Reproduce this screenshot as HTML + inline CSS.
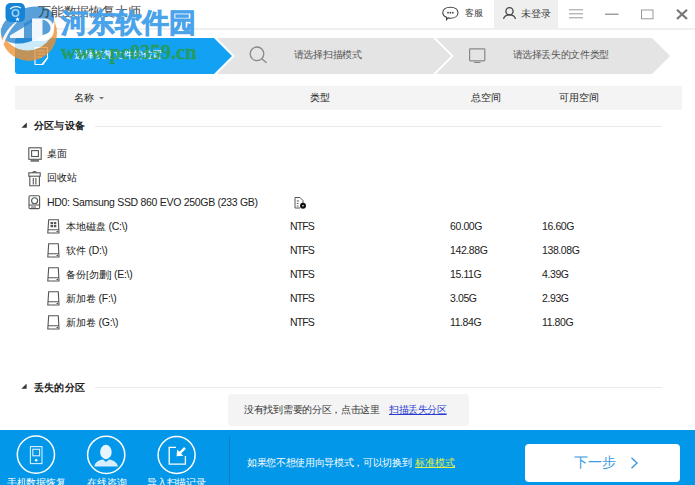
<!DOCTYPE html>
<html><head><meta charset="utf-8">
<style>
*{margin:0;padding:0;box-sizing:border-box}
html,body{width:695px;height:485px;overflow:hidden;background:#fff}
body{position:relative;font-family:"Liberation Sans",sans-serif;color:#222;font-size:9.8px}
.a{position:absolute;white-space:nowrap}
.t{line-height:12px}
.L{font-size:10.5px;letter-spacing:-.3px}
.N{font-size:10.5px;letter-spacing:-.4px}
.F{font-size:10.5px;letter-spacing:-.9px}
svg{position:absolute;overflow:visible}
</style></head><body>

<!-- title bar -->
<div class="a" style="left:0;top:28px;width:695px;height:2px;background:#f0f0f0"></div>
<div class="a" style="left:494px;top:0;width:64px;height:28px;background:#efefef"></div>
<svg style="left:0;top:0" width="695" height="30">
  <!-- chat -->
  <path d="M450.3,7.2 C455,7.2 458,9.5 458,12.7 C458,15.9 455,18.2 450.3,18.2 C449.5,18.2 448.7,18.1 448,17.9 L446.5,19.6 L446.6,17.3 C444.2,16.4 442.8,14.7 442.8,12.7 C442.8,9.5 445.7,7.2 450.3,7.2 Z" fill="none" stroke="#444" stroke-width="1.1"/>
  <circle cx="448" cy="12.7" r=".9" fill="#444"/><circle cx="450.4" cy="12.7" r=".9" fill="#444"/><circle cx="452.8" cy="12.7" r=".9" fill="#444"/>
  <!-- person -->
  <circle cx="509.5" cy="11.2" r="3.6" fill="none" stroke="#444" stroke-width="1.3"/>
  <path d="M503.6,19 C504,16.2 506.5,14.8 509.5,14.8 C512.5,14.8 515,16.2 515.4,19" fill="none" stroke="#444" stroke-width="1.3"/>
  <!-- menu -->
  <path d="M569,9.8 H583 M569,13.8 H583 M569,17.8 H583" stroke="#999" stroke-width="1"/>
  <!-- minimize -->
  <path d="M605,14.2 H618.5" stroke="#888" stroke-width="1.2"/>
  <!-- maximize -->
  <rect x="641.5" y="10" width="11.5" height="8.8" fill="none" stroke="#999" stroke-width="1"/>
  <!-- close -->
  <path d="M677,9.8 L687,19 M687,9.8 L677,19" stroke="#777" stroke-width="2.2"/>
</svg>
<div class="a t" style="left:464.5px;top:7px;font-size:9.3px;color:#3a3a3a">客服</div>
<div class="a t" style="left:520.5px;top:8px;font-size:9.6px;color:#3a3a3a">未登录</div>

<!-- steps -->
<svg style="left:0;top:0" width="695" height="90">
  <polygon points="200,38 652,38 670,56 652,74 200,74" fill="#e4e4e4"/>
  <path d="M433.5,37 L452.5,56 L433.5,75" fill="none" stroke="#fff" stroke-width="2"/>
  <path d="M213.5,37 L232.5,56 L213.5,75" fill="none" stroke="#fff" stroke-width="3.2"/>
  <path d="M15,41 a3,3 0 0 1 3,-3 H214 L232,56 L214,74 H18 a3,3 0 0 1 -3,-3 Z" fill="#12a1f3"/>
  <!-- step1 doc icon -->
  <path d="M35,47.5 H47.5 V58 L43,64.5 H35 Z" fill="none" stroke="#fff" stroke-width="1.1"/>
  <path d="M37.5,51 H45 M37.5,54 H45 M37.5,57 H42" stroke="#fff" stroke-width="1.1"/>
  <path d="M42,64 L48,57" stroke="#fff" stroke-width="1.1"/>
  <!-- magnifier -->
  <circle cx="257" cy="53.8" r="6.8" fill="none" stroke="#888" stroke-width="1.3"/>
  <path d="M261.8,58.8 L266.5,62.8" stroke="#888" stroke-width="1.3"/>
  <!-- monitor -->
  <rect x="469.6" y="48.8" width="15.2" height="12" rx=".8" fill="none" stroke="#888" stroke-width="1.2"/>
  <path d="M474,62.5 H480.5" stroke="#888" stroke-width="1"/>
</svg>
<div class="a t" style="left:74px;top:49px;font-size:9.7px;letter-spacing:-.2px;color:#fff">选择恢复文件的位置</div>
<div class="a t" style="left:293.5px;top:49px;font-size:9.7px;letter-spacing:-.25px;color:#555">请选择扫描模式</div>
<div class="a t" style="left:512.5px;top:49px;font-size:9.7px;letter-spacing:-.35px;color:#555">请选择丢失的文件类型</div>

<!-- table header -->
<div class="a" style="left:15px;top:86px;width:667px;height:24px;background:#f4f4f4"></div>
<div class="a t" style="left:74px;top:92px;font-size:10px">名称</div>
<svg style="left:0;top:0" width="10" height="10"><path d="M99,97 H104 L101.5,99.5Z" fill="#777"/></svg>
<div class="a t" style="left:310px;top:92px;font-size:10.2px">类型</div>
<div class="a t" style="left:470.5px;top:92px;font-size:9.7px">总空间</div>
<div class="a t" style="left:558.5px;top:92px;font-size:9.7px">可用空间</div>

<!-- section 1 -->
<svg style="left:0;top:0" width="10" height="10"><path d="M21.5,127.8 L26.8,122.6 V127.8Z" fill="#333"/><path d="M21.3,388.8 L26.6,383.8 V388.8Z" fill="#333"/></svg>
<div class="a t" style="left:34px;top:120px;font-size:10.2px;font-weight:bold;letter-spacing:.2px">分区与设备</div>
<div class="a" style="left:95px;top:126px;width:567px;height:1px;background:#e6eaee"></div>

<svg style="left:0;top:0" width="10" height="10">
  <g fill="none" stroke="#555" stroke-width="1.1">
  <!-- desktop -->
  <rect x="28.8" y="147.8" width="12.4" height="11.5"/>
  <rect x="31.6" y="150.6" width="6.8" height="5.9"/>
  </g>
  <rect x="30.5" y="160" width="8.5" height="1.8" fill="#777"/>
  <!-- trash -->
  <g fill="none" stroke="#555" stroke-width="1.1">
  <rect x="28.8" y="172.8" width="11.4" height="3.4"/>
  <path d="M29.8,176.3 V185.8 H39.4 V176.3"/>
  <path d="M33.3,178 V184.5 M35.9,178 V184.5"/>
  <path d="M32.5,172.5 Q34.5,170.8 36.5,172.5"/>
  </g>
  <!-- hdd -->
  <g fill="none" stroke="#555" stroke-width="1.1">
  <rect x="29" y="195.8" width="10.6" height="12.8" rx="1.2"/>
  <circle cx="34.6" cy="200.8" r="3"/>
  <path d="M29,205 H39.6 M31,207 H36"/>
  </g>
  <!-- doc with black circle -->
  <g fill="none" stroke="#555" stroke-width="1">
  <path d="M295,197.5 H300 L303,200.5 V203 M295,197.5 V208 H300"/>
  <path d="M296.8,201 H299 M296.8,203.5 H298.5 M296.8,206 H298.5"/>
  </g>
  <circle cx="303" cy="205.8" r="3" fill="#111"/>
  <circle cx="303" cy="205.8" r=".8" fill="#fff"/>
  <!-- drives -->
  <g fill="none" stroke="#555" stroke-width="1.1">
  <path d="M48.7,219.8 H58.3 L59,233 H47.8 Z M47.8,229.8 H59"/>
  <path d="M48.7,243.8 H58.3 L59,257 H47.8 Z M47.8,253.8 H59"/>
  <path d="M48.7,267.8 H58.3 L59,281 H47.8 Z M47.8,277.8 H59"/>
  <path d="M48.7,291.8 H58.3 L59,305 H47.8 Z M47.8,301.8 H59"/>
  <path d="M48.7,315.8 H58.3 L59,329 H47.8 Z M47.8,325.8 H59"/>
  </g>
  <path d="M50.5,222 h2.5 v2.2 h-2.5z M53.8,222 h2.5 v2.2 h-2.5z M50.5,225 h2.5 v2.2 h-2.5z M53.8,225 h2.5 v2.2 h-2.5z" fill="#555"/>
  <path d="M56.5,231.5 h1.5 M56.5,255.5 h1.5 M56.5,279.5 h1.5 M56.5,303.5 h1.5 M56.5,327.5 h1.5" stroke="#555" stroke-width="1"/>
</svg>

<div class="a t" style="left:47px;top:148px;font-size:9.5px">桌面</div>
<div class="a t" style="left:47px;top:172px;font-size:9.5px">回收站</div>
<div class="a t L" style="left:47px;top:196px">HD0: Samsung SSD 860 EVO 250GB (233 GB)</div>

<div class="a t" style="left:66px;top:220px">本地磁盘<span class="L"> (C:\)</span></div>
<div class="a t" style="left:66px;top:244px">软件<span class="L"> (D:\)</span></div>
<div class="a t" style="left:66px;top:268px">备份[勿删]<span class="L"> (E:\)</span></div>
<div class="a t" style="left:66px;top:292px">新加卷<span class="L"> (F:\)</span></div>
<div class="a t" style="left:66px;top:316px">新加卷<span class="L"> (G:\)</span></div>

<div class="a t F" style="left:290px;top:220px">NTFS</div>
<div class="a t F" style="left:290px;top:244px">NTFS</div>
<div class="a t F" style="left:290px;top:268px">NTFS</div>
<div class="a t F" style="left:290px;top:292px">NTFS</div>
<div class="a t F" style="left:290px;top:316px">NTFS</div>

<div class="a t N" style="left:450px;top:220px">60.00G</div>
<div class="a t N" style="left:450px;top:244px">142.88G</div>
<div class="a t N" style="left:450px;top:268px">15.11G</div>
<div class="a t N" style="left:450px;top:292px">3.05G</div>
<div class="a t N" style="left:450px;top:316px">11.84G</div>

<div class="a t N" style="left:542px;top:220px">16.60G</div>
<div class="a t N" style="left:542px;top:244px">138.08G</div>
<div class="a t N" style="left:542px;top:268px">4.39G</div>
<div class="a t N" style="left:542px;top:292px">2.93G</div>
<div class="a t N" style="left:542px;top:316px">11.80G</div>

<!-- section 2 -->
<div class="a t" style="left:34px;top:381.5px;font-size:10.2px;font-weight:bold;letter-spacing:.2px">丢失的分区</div>
<div class="a" style="left:95px;top:387px;width:567px;height:1px;background:#e6eaee"></div>
<div class="a" style="left:228px;top:394px;width:241px;height:32px;border-radius:4px;background:#f4f4f4"></div>
<div class="a t" style="left:244px;top:404px;font-size:9.5px;letter-spacing:-.3px;color:#333">没有找到需要的分区，点击这里</div>
<div class="a t" style="left:389px;top:404px;font-size:9.5px;letter-spacing:-.4px;color:#2a3ad0;text-decoration:underline">扫描丢失分区</div>

<!-- bottom bar -->
<div class="a" style="left:0;top:430px;width:695px;height:55px;background:#0397e9"></div>
<div class="a" style="left:229px;top:437px;width:1px;height:48px;background:#0d7cc4"></div>
<svg style="left:0;top:0" width="10" height="10">
  <g fill="none" stroke="#fff" stroke-width="1.5">
    <circle cx="35.9" cy="454.6" r="18.6"/>
    <circle cx="106.2" cy="454.8" r="18.6"/>
    <circle cx="176.6" cy="455" r="18.5"/>
  </g>
  <!-- phone -->
  <g fill="none" stroke="#d8eefc" stroke-width="1.1">
    <rect x="30.4" y="446.6" width="11.6" height="17"/>
    <rect x="32.8" y="449.3" width="6.8" height="6.5"/>
  </g>
  <circle cx="36.2" cy="460.2" r="1.3" fill="#fff"/>
  <!-- person -->
  <ellipse cx="105.9" cy="452" rx="5.8" ry="7.2" fill="#e6f4fd"/>
  <path d="M94.3,466.5 C95,462 99,460 103,459.5 L106,462 L109,459.5 C113,460 117,462 118,466.5 Z" fill="#d8eefc"/>
  <!-- import -->
  <path d="M176,447.3 H169.2 V464.2 H185.4 V456" fill="none" stroke="#fff" stroke-width="1.3"/>
  <path d="M185,447.8 L179.5,453.3" stroke="#fff" stroke-width="2.4"/>
  <path d="M176.5,456.3 L177.2,449.6 L183.4,455.8 Z" fill="#fff"/>
</svg>
<div class="a t" style="left:7px;top:477px;font-size:9.5px;letter-spacing:-.3px;color:#fff">手机数据恢复</div>
<div class="a t" style="left:87px;top:477px;font-size:9.7px;color:#fff">在线咨询</div>
<div class="a t" style="left:147px;top:477px;font-size:9.7px;letter-spacing:-.2px;color:#fff">导入扫描记录</div>

<div class="a t" style="left:247px;top:457px;font-size:9.6px;letter-spacing:-.33px;color:#fff">如果您不想使用向导模式，可以切换到</div>
<div class="a t" style="left:415px;top:457px;font-size:9.6px;color:#e8f040;text-decoration:underline">标准模式</div>
<div class="a" style="left:525px;top:443.5px;width:155px;height:38.5px;border-radius:4px;background:#fff"></div>
<div class="a" style="left:574px;top:455px;font-size:13.5px;line-height:16px;color:#3a9ae0">下一步</div>
<svg style="left:0;top:0" width="10" height="10">
  <!-- chevron -->
  <path d="M631.5,457.8 L637,463 L631.5,468.2" fill="none" stroke="#3a9ae0" stroke-width="1.4"/>
</svg>

<!-- watermark -->
<svg style="left:0;top:0" width="10" height="10">
  <g opacity=".78">
    <circle cx="29" cy="33" r="28" fill="#f09030"/>
    <circle cx="27.5" cy="23.5" r="27" fill="#fff"/>
    <ellipse cx="27.5" cy="25" rx="28" ry="16.5" transform="rotate(-22 27.5 25)" fill="#2a86cf"/>
  </g>
  <g fill="#fff" opacity=".92">
    <path d="M10,35.5 L34,21 V38 H10 Z"/>
    <path d="M32,18.5 H44 C50,18.5 54,23 54,29.5 C54,36 50,41 43,41 H32 Z"/>
    <path d="M1,44 C4,33 10,25 19,20 C13,26 7,34 4,44 Z"/>
  </g>
  <g fill="#2a86cf" opacity=".78">
    <path d="M24,23.5 L32,19 V40 H24 Z"/>
    <path d="M42.5,19.5 C47.5,20.5 50.5,24.5 50.5,28.5 C50.5,31 49,33.5 42.5,35 Z"/>
  </g>
</svg>
<div class="a" style="left:38px;top:5px;font-size:12.75px;letter-spacing:-.2px;line-height:14px;color:#2a2a2a;opacity:.85">万能数据恢复大师</div>
<div class="a" style="left:61px;top:7px;font-size:27px;line-height:32px;font-weight:bold;color:rgba(70,162,234,.9);-webkit-text-stroke:.8px rgba(70,162,234,.9)">河东软件园</div>
<div class="a" style="left:61px;top:41px;font-family:'Liberation Serif',serif;font-size:20.5px;line-height:22px;font-weight:bold;color:rgba(40,155,72,.82);-webkit-text-stroke:.4px rgba(40,155,72,.82)">www.pc0359.cn</div>

<svg style="left:0;top:0" width="10" height="10">
  <rect x="5.5" y="3" width="19.5" height="19" rx="5" fill="#1584d6"/>
  <path d="M10,9 Q15,5 21,8" stroke="#fff" stroke-width="1.2" fill="none" opacity=".9"/>
  <circle cx="15.5" cy="13" r="3.2" fill="none" stroke="#9fd0f5" stroke-width="1.6"/>
  <path d="M17.5,17 l.7,1.5 1.6,.1 -1.2,1 .4,1.6 -1.5,-.9 -1.4,.9 .4,-1.6 -1.2,-1 1.6,-.1z" fill="#fff"/>
</svg>
</body></html>
